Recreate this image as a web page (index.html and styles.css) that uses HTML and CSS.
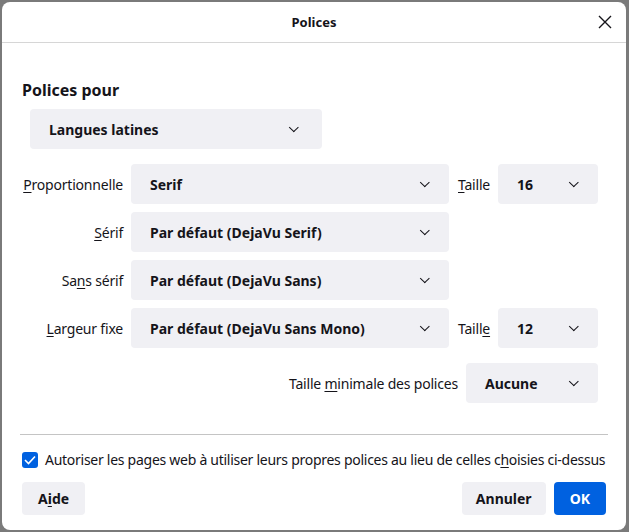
FILE: index.html
```html
<!DOCTYPE html>
<html lang="fr">
<head>
<meta charset="utf-8">
<title>Polices</title>
<link rel="stylesheet" href="styles.css">
</head>
<body>
<div class="dialog">
  <header class="titlebar">
    <span class="title">Polices</span>
    <button class="close" aria-label="Fermer">
      <svg width="14" height="14" viewBox="0 0 14 14"><path d="M1 1 L13 13 M13 1 L1 13" stroke="#15141a" stroke-width="1.4" fill="none"/></svg>
    </button>
  </header>

  <main class="content">
    <h2 class="heading">Polices pour</h2>
    <div class="select lang">Langues latines<span class="chev"></span></div>

    <div class="form">
      <label class="lbl"><u>P</u>roportionnelle</label>
      <div class="select">Serif<span class="chev"></span></div>
      <label class="lbl size"><u>T</u>aille</label>
      <div class="select small">16<span class="chev"></span></div>

      <label class="lbl"><u>S</u>érif</label>
      <div class="select">Par défaut (DejaVu Serif)<span class="chev"></span></div>
      <span></span><span></span>

      <label class="lbl">Sa<u>n</u>s sérif</label>
      <div class="select">Par défaut (DejaVu Sans)<span class="chev"></span></div>
      <span></span><span></span>

      <label class="lbl"><u>L</u>argeur fixe</label>
      <div class="select">Par défaut (DejaVu Sans Mono)<span class="chev"></span></div>
      <label class="lbl size">Taill<u>e</u></label>
      <div class="select small">12<span class="chev"></span></div>
    </div>

    <div class="minrow">
      <label class="lbl">Taille <u>m</u>inimale des polices</label>
      <div class="select min">Aucune<span class="chev"></span></div>
    </div>

    <hr class="sep">

    <label class="check">
      <span class="box"><svg width="12" height="10" viewBox="0 0 12 10"><path d="M1 5 L4.5 8.5 L11 1.5" stroke="#fff" stroke-width="1.6" fill="none"/></svg></span>
      <span class="check-text">Autoriser les pages web à utiliser leurs propres polices au lieu de celles c<u>h</u>oisies ci-dessus</span>
    </label>

    <div class="buttons">
      <button class="btn">A<u>i</u>de</button>
      <span class="spacer"></span>
      <button class="btn cancel">Annuler</button>
      <button class="btn primary">OK</button>
    </div>
  </main>
</div>
</body>
</html>
```
FILE: styles.css
```css
html, body {
  margin: 0;
  height: 100%;
}
body {
  background: #7a7a7a;
  font-family: "Noto Sans", "Open Sans", sans-serif;
  font-size: 14px;
  color: #15141a;
  padding: 2px 3px 2px 2px;
  box-sizing: border-box;
}
u { text-decoration-thickness: 1px; text-underline-offset: 2px; }

.dialog {
  background: #fff;
  height: 100%;
  border-radius: 8px;
  display: flex;
  flex-direction: column;
  overflow: hidden;
}

.titlebar {
  height: 40px;
  border-bottom: 1px solid #d6d6d6;
  display: flex;
  align-items: center;
  justify-content: center;
  position: relative;
  flex: none;
}
.title { font-weight: 700; font-size: 13px; }
.close {
  position: absolute;
  right: 14px;
  top: 13px;
  border: 0;
  background: none;
  padding: 0;
  width: 14px;
  height: 14px;
  display: block;
}
.close svg { display: block; }

.content {
  padding: 36px 20px 16px 20px;
  flex: 1;
  display: flex;
  flex-direction: column;
}

.heading {
  margin: 0 0 8px 0;
  font-size: 16px;
  font-weight: 700;
  line-height: 22px;
}

.select {
  background: #f0f0f4;
  border-radius: 4px;
  height: 40px;
  box-sizing: border-box;
  display: flex;
  align-items: center;
  padding: 0 20px 0 19px;
  font-weight: 700;
  position: relative;
}
.chev {
  margin-left: auto;
  width: 6px;
  height: 6px;
  border-right: 1.3px solid #15141a;
  border-bottom: 1.3px solid #15141a;
  transform: rotate(45deg) translate(-2px, -1px);
}
.lang { width: 292px; margin-left: 8px; padding-right: 24px; }

.form {
  margin-top: 15px;
  display: grid;
  grid-template-columns: 101px 318px auto 100px;
  justify-content: start;
  column-gap: 8px;
  row-gap: 8px;
  align-items: center;
}
.lbl { text-align: right; white-space: nowrap; letter-spacing: -0.2px; }
.size { margin-left: 1px; }
.small { padding-left: 19px; }

.minrow {
  margin-top: 15px;
  display: flex;
  justify-content: flex-end;
  align-items: center;
  gap: 8px;
  padding-right: 8px;
}
.min { width: 132px; }

.sep {
  margin: 31px -2px 0 -2px;
  border: 0;
  border-top: 1px solid #c4c4c4;
  height: 0;
}

.check {
  margin-top: 15px;
  display: flex;
  align-items: center;
  gap: 7px;
  white-space: nowrap;
}
.check-text { letter-spacing: -0.27px; }
.box {
  width: 16px;
  height: 16px;
  border-radius: 3px;
  background: #0061e0;
  display: flex;
  align-items: center;
  justify-content: center;
  flex: none;
}

.buttons {
  margin-top: 13px;
  display: flex;
  gap: 8px;
}
.spacer { flex: 1; }
.btn {
  font: inherit;
  font-weight: 700;
  color: #15141a;
  background: #f0f0f4;
  border: 0;
  border-radius: 4px;
  height: 33px;
  padding: 0 16px;
}
.cancel { padding: 0 14px; }
.primary { background: #0061e0; color: #fff; }
```
